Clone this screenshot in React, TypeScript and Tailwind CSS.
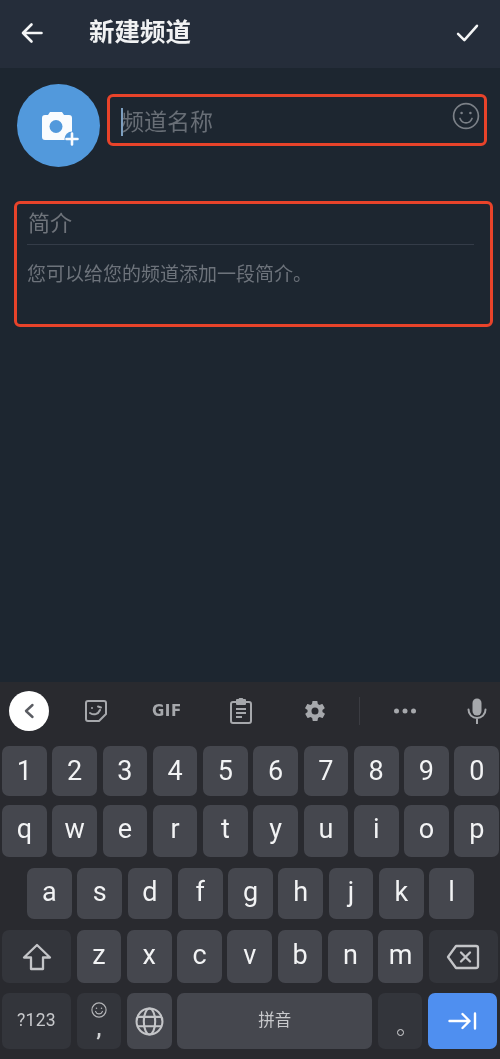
import React from "react";

const font = { fontFamily: '"Roboto", "Noto Sans CJK SC", sans-serif' };

function Key({ children, className = "" }: { children: React.ReactNode; className?: string }) {
  return (
    <div className={`flex items-center justify-center rounded-[7px] leading-none ${className}`}>
      {children}
    </div>
  );
}

function Row({ keys, className = "", pad = "pb-[3px]" }: { keys: string[]; className?: string; pad?: string }) {
  return (
    <div className={`flex gap-[5.6px] ${className}`}>
      {keys.map((k) => (
        <Key key={k} className={`h-full w-[44.7px] bg-[#45474e] text-[27px] text-[#f2f3f4] ${pad}`}>
          {k}
        </Key>
      ))}
    </div>
  );
}

function Smile({ size, stroke, sw }: { size: number; stroke: string; sw: number }) {
  return (
    <svg width={size} height={size} viewBox="0 0 28 28" fill="none" stroke={stroke} strokeWidth={sw}>
      <circle cx="14" cy="14" r="12.4" />
      <circle cx="9.6" cy="11" r="1.3" fill={stroke} stroke="none" />
      <circle cx="18.4" cy="11" r="1.3" fill={stroke} stroke="none" />
      <path d="M8 16.5c1.3 3 3.4 4.4 6 4.4s4.7-1.4 6-4.4" strokeLinecap="round" />
    </svg>
  );
}

export default function App() {
  return (
    <div style={font} className="flex h-[1059px] w-[500px] flex-col overflow-hidden bg-[#1d2630] blur-[0.4px]">
      {/* Header */}
      <header className="flex h-[68px] shrink-0 items-center bg-[#252d3a] pb-[3px] pl-[21px] pr-[21px]">
        <svg width="22" height="22" viewBox="0 0 22 22" fill="none" stroke="#f4f5f6" strokeWidth="2.6" strokeLinecap="round" strokeLinejoin="round">
          <path d="M20.5 11H2M10.5 2.5 2 11l8.500 8.500" />
        </svg>
        <h1 className="ml-[46px] flex-1 text-[25.5px] font-bold leading-none text-[#f1f2f3]">新建频道</h1>
        <svg width="23" height="18" viewBox="0 0 24 20" fill="none" stroke="#f4f5f6" strokeWidth="2.8" strokeLinecap="round" strokeLinejoin="round">
          <path d="M1.500 11 8.500 18 22.500 2" />
        </svg>
      </header>

      {/* Name row */}
      <div className="mt-[16px] flex items-start pl-[17px]">
        <div className="flex h-[83px] w-[83px] shrink-0 items-center justify-center rounded-full bg-[#5299dc]">
          <svg width="40" height="40" viewBox="0 0 40 40" className="ml-[2px] mt-[3px]">
            <path
              fill="#fafcfe"
              d="M10 5h12l2 3h5a3 3 0 0 1 3 3v19a3 3 0 0 1-3 3H5a3 3 0 0 1-3-3V11a3 3 0 0 1 3-3h3l2-3Z"
            />
            <circle cx="16" cy="19.500" r="6.500" fill="#5299dc" />
            <circle cx="32" cy="32" r="7.500" fill="#5299dc" />
            <path d="M32 26.500v11M26.500 32h11" stroke="#fafcfe" strokeWidth="2.600" strokeLinecap="round" />
          </svg>
        </div>
        <div className="ml-[7px] mt-[10px] flex h-[52px] w-[380px] items-center rounded-[6px] border-[3px] border-[#e8432a] pl-[11px] pr-[4px]">
          <div className="relative mt-[4px] flex-1 text-[23px] leading-none text-[#686e76]">
            <span className="absolute left-0 top-[-3px] h-[28px] w-[2px] bg-[#7d9fc0]" />
            频道名称
          </div>
          <div className="mb-[9px]">
            <Smile size={28} stroke="#7b8087" sw={1.7} />
          </div>
        </div>
      </div>

      {/* Description */}
      <div className="ml-[14px] mt-[34px] h-[126px] w-[479px] rounded-[6px] border-[3px] border-[#e8432a] pl-[10px] pr-[16px] pt-[7px]">
        <div className="pl-[1px] text-[22px] leading-[26px] text-[#6f747b]">简介</div>
        <div className="mt-[7px] h-[1px] bg-[#343c48]" />
        <div className="mt-[19px] text-[19px] leading-[22px] text-[#6d737b]">您可以给您的频道添加一段简介。</div>
      </div>

      <div className="flex-1" />

      {/* Keyboard */}
      <div className="flex h-[377px] shrink-0 flex-col bg-[#292a2f]">
        {/* Toolbar */}
        <div className="mb-[6px] flex h-[58px] shrink-0 items-center">
          <div className="ml-[9px] flex h-[40px] w-[40px] items-center justify-center rounded-full bg-white">
            <svg width="12" height="16" viewBox="0 0 12 16" fill="none" stroke="#5a5c62" strokeWidth="2.400" strokeLinecap="round" strokeLinejoin="round">
              <path d="M9.500 2 3 8l6.500 6" />
            </svg>
          </div>
          <svg width="24" height="24" viewBox="0 0 24 24" fill="none" stroke="#a6a8ac" strokeWidth="2" strokeLinecap="round" strokeLinejoin="round" className="ml-[35px]">
            <path d="M4 2h16a2 2 0 0 1 2 2v11l-7 7H4a2 2 0 0 1-2-2V4a2 2 0 0 1 2-2Z" />
            <path d="M6 14c4 2.500 8 1.500 10-3M8 9h.01M14 7.500l3 1" />
          </svg>
          <span className="ml-[44px] w-[31px] text-[15px] font-black leading-none tracking-[0.5px] text-[#a6a8ac]" style={{ fontFamily: '"DejaVu Sans", sans-serif' }}>GIF</span>
          <svg width="22" height="26" viewBox="0 0 22 26" fill="none" stroke="#a6a8ac" strokeWidth="2" strokeLinejoin="round" className="ml-[47px]">
            <path d="M6.500 4H3a2 2 0 0 0-2 2v17a2 2 0 0 0 2 2h16a2 2 0 0 0 2-2V6a2 2 0 0 0-2-2h-3.500" />
            <path d="M7 2h2.500a1.500 1.500 0 0 1 3 0H15v4H7V2Z" fill="#a6a8ac" />
            <path d="M6 11h10M6 15h10M6 19h6" />
          </svg>
          <svg width="24" height="24" viewBox="0 0 24 24" fill="#a6a8ac" className="ml-[51px]">
            <path d="M19.400 13c.1-.3.1-.7.1-1s0-.7-.1-1l2.100-1.600c.2-.2.200-.4.100-.6l-2-3.500c-.1-.2-.4-.3-.6-.2l-2.500 1c-.5-.4-1.100-.7-1.700-1l-.4-2.700c0-.2-.2-.4-.5-.4h-4c-.3 0-.5.200-.5.400l-.4 2.700c-.6.3-1.200.6-1.700 1l-2.500-1c-.2-.1-.5 0-.6.200l-2 3.500c-.1.200-.1.500.1.600L4.600 11c-.1.300-.1.700-.1 1s0 .7.100 1l-2.100 1.600c-.2.200-.2.400-.1.600l2 3.500c.1.200.4.300.6.200l2.500-1c.5.400 1.100.7 1.700 1l.4 2.700c0 .2.200.4.500.4h4c.3 0 .5-.2.500-.4l.4-2.700c.6-.3 1.200-.6 1.700-1l2.500 1c.2.100.5 0 .6-.2l2-3.500c.1-.2.100-.5-.1-.6L19.400 13ZM12 15.500a3.500 3.500 0 1 1 0-7 3.500 3.500 0 0 1 0 7Z" />
          </svg>
          <div className="ml-[32px] h-[28px] w-[1px] bg-[#3b3c42]" />
          <svg width="24" height="6" viewBox="0 0 24 6" fill="#a6a8ac" className="ml-[33px]">
            <circle cx="3.500" cy="3" r="2.500" />
            <circle cx="12" cy="3" r="2.500" />
            <circle cx="20.500" cy="3" r="2.500" />
          </svg>
          <svg width="20" height="26" viewBox="0 0 20 26" fill="none" className="ml-[50px]">
            <rect x="5.500" y="0.500" width="9" height="17" rx="4.500" fill="#a6a8ac" />
            <path d="M1.500 11.500c0 5 3.800 8.500 8.500 8.500s8.500-3.500 8.500-8.500M10 20v5.500" stroke="#a6a8ac" strokeWidth="2" strokeLinecap="round" />
          </svg>
        </div>

        {/* Keys */}
        <div className="flex flex-col pl-[2px] pr-[1px]">
          <Row className="h-[50px]" pad="pb-[0px]" keys={["1", "2", "3", "4", "5", "6", "7", "8", "9", "0"]} />
          <Row className="mt-[9px] h-[52px]" keys={["q", "w", "e", "r", "t", "y", "u", "i", "o", "p"]} />
          <Row className="ml-[25px] mt-[11px] h-[51px]" keys={["a", "s", "d", "f", "g", "h", "j", "k", "l"]} />
          <div className="mt-[11px] flex h-[53px] gap-[5.600px]">
            <Key className="w-[69px] bg-[#33353b]">
              <svg width="30" height="28" viewBox="0 0 30 28" fill="none" stroke="#c4c5c8" strokeWidth="2.300" strokeLinejoin="round">
                <path d="M15 2 2 14.500h7V26h12V14.500h7L15 2Z" />
              </svg>
            </Key>
            {["z", "x", "c", "v", "b", "n", "m"].map((k) => (
              <Key key={k} className="w-[44.700px] bg-[#45474e] pb-[3px] text-[27px] text-[#f2f3f4]">
                {k}
              </Key>
            ))}
            <Key className="w-[69px] bg-[#33353b]">
              <svg width="34" height="26" viewBox="0 0 34 26" fill="none" stroke="#c4c5c8" strokeWidth="2.300" strokeLinejoin="round">
                <path d="M10 2h20a2 2 0 0 1 2 2v18a2 2 0 0 1-2 2H10L2 13l8-11Z" />
                <path d="m15 8.500 9 9M24 8.500l-9 9" strokeLinecap="round" />
              </svg>
            </Key>
          </div>
          <div className="mt-[10px] flex h-[56px] gap-[5.600px]">
            <Key className="w-[69px] bg-[#33353b] text-[17.500px] tracking-[0.3px] text-[#c8c9cc]">?123</Key>
            <Key className="w-[44.700px] flex-col bg-[#33353b] text-[#d0d1d3]">
              <Smile size={16} stroke="#b4b5b8" sw={2} />
              <span className="mt-[2px] h-[20px] text-[24px] font-medium leading-[16px]">,</span>
            </Key>
            <Key className="w-[44.700px] bg-[#45474e]">
              <svg width="29" height="29" viewBox="0 0 28 28" fill="none" stroke="#c4c5c8" strokeWidth="2">
                <circle cx="14" cy="14" r="12.500" />
                <ellipse cx="14" cy="14" rx="5.500" ry="12.500" />
                <path d="M2.500 9.500h23M2.500 18.500h23" />
              </svg>
            </Key>
            <Key className="w-[195px] bg-[#45474e] text-[16.500px] text-[#c8c9cc]">拼音</Key>
            <Key className="w-[44.700px] bg-[#33353b] pt-[22px]">
              <span className="block h-[7px] w-[7px] rounded-full border-[1.500px] border-[#d6d7d9]" />
            </Key>
            <Key className="w-[69px] bg-[#4f8ff0]">
              <svg width="29" height="18" viewBox="0 0 29 18" fill="none" stroke="#fff" strokeWidth="2.400" strokeLinecap="round" strokeLinejoin="round">
                <path d="M1.500 9h20M14.500 2l7 7-7 7M27 1.500v15" />
              </svg>
            </Key>
          </div>
        </div>
      </div>
    </div>
  );
}
